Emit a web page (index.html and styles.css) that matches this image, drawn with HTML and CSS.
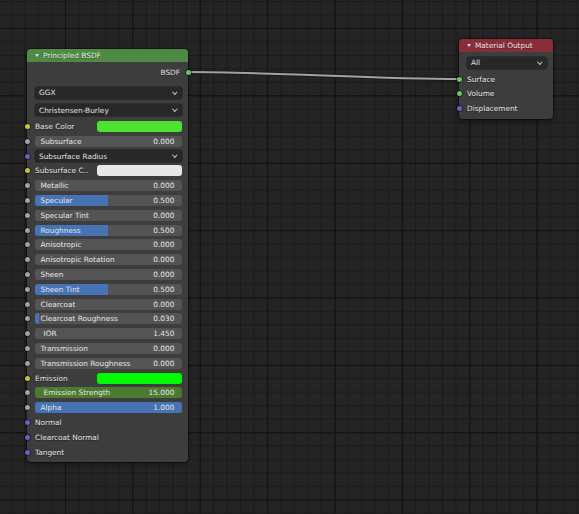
FILE: index.html
```html
<!DOCTYPE html>
<html>
<head>
<meta charset="utf-8">
<link rel="stylesheet" href="styles.css">
</head>
<body>
<div class="canvas">
  <svg class="links" width="579" height="514" viewBox="0 0 579 514">
    <path d="M188 72 C 270 72, 377 79, 459 79" class="link-back"/>
    <path d="M188 72 C 270 72, 377 79, 459 79" class="link-front"/>
  </svg>

  <div class="node bsdf">
    <div class="header green"><span class="tri"></span>Principled BSDF</div>
    <div class="body">
      <div class="row out"><span class="label">BSDF</span><span class="socket right shader"></span></div>
      <div class="row drop first"><div class="dropdown"><span>GGX</span><span class="chev"></span></div></div>
      <div class="row drop second"><div class="dropdown"><span>Christensen-Burley</span><span class="chev"></span></div></div>
      <div class="row in base"><span class="socket color"></span><span class="plabel">Base Color</span><span class="swatch" style="background:#4de22f"></span></div>
      <div class="row in"><span class="socket float"></span><div class="field"><span class="name">Subsurface</span><span class="val">0.000</span></div></div>
      <div class="row in"><span class="socket vector"></span><div class="dropdown"><span>Subsurface Radius</span><span class="chev"></span></div></div>
      <div class="row in"><span class="socket color"></span><span class="plabel">Subsurface C..</span><span class="swatch" style="background:#e8e8e8"></span></div>
      <div class="row in"><span class="socket float"></span><div class="field"><span class="name">Metallic</span><span class="val">0.000</span></div></div>
      <div class="row in"><span class="socket float"></span><div class="field"><span class="fill" style="width:50%"></span><span class="name">Specular</span><span class="val">0.500</span></div></div>
      <div class="row in"><span class="socket float"></span><div class="field"><span class="name">Specular Tint</span><span class="val">0.000</span></div></div>
      <div class="row in"><span class="socket float"></span><div class="field"><span class="fill" style="width:50%"></span><span class="name">Roughness</span><span class="val">0.500</span></div></div>
      <div class="row in"><span class="socket float"></span><div class="field"><span class="name">Anisotropic</span><span class="val">0.000</span></div></div>
      <div class="row in"><span class="socket float"></span><div class="field"><span class="name">Anisotropic Rotation</span><span class="val">0.000</span></div></div>
      <div class="row in"><span class="socket float"></span><div class="field"><span class="name">Sheen</span><span class="val">0.000</span></div></div>
      <div class="row in"><span class="socket float"></span><div class="field"><span class="fill" style="width:50%"></span><span class="name">Sheen Tint</span><span class="val">0.500</span></div></div>
      <div class="row in"><span class="socket float"></span><div class="field"><span class="name">Clearcoat</span><span class="val">0.000</span></div></div>
      <div class="row in"><span class="socket float"></span><div class="field"><span class="fill" style="width:3%"></span><span class="name">Clearcoat Roughness</span><span class="val">0.030</span></div></div>
      <div class="row in"><span class="socket float"></span><div class="field"><span class="name wide">IOR</span><span class="val">1.450</span></div></div>
      <div class="row in"><span class="socket float"></span><div class="field"><span class="name">Transmission</span><span class="val">0.000</span></div></div>
      <div class="row in"><span class="socket float"></span><div class="field"><span class="name">Transmission Roughness</span><span class="val">0.000</span></div></div>
      <div class="row in"><span class="socket color"></span><span class="plabel">Emission</span><span class="swatch" style="background:#00fa00"></span></div>
      <div class="row in"><span class="socket float"></span><div class="field anim"><span class="name wide">Emission Strength</span><span class="val">15.000</span></div></div>
      <div class="row in"><span class="socket float"></span><div class="field"><span class="fill" style="width:100%"></span><span class="name">Alpha</span><span class="val">1.000</span></div></div>
      <div class="row in"><span class="socket vector"></span><span class="plabel">Normal</span></div>
      <div class="row in"><span class="socket vector"></span><span class="plabel">Clearcoat Normal</span></div>
      <div class="row in"><span class="socket vector"></span><span class="plabel">Tangent</span></div>
    </div>
  </div>

  <div class="node output">
    <div class="header red"><span class="tri"></span>Material Output</div>
    <div class="body">
      <div class="row drop all"><div class="dropdown"><span>All</span><span class="chev"></span></div></div>
      <div class="row in first-in"><span class="socket shader"></span><span class="plabel">Surface</span></div>
      <div class="row in"><span class="socket shader"></span><span class="plabel">Volume</span></div>
      <div class="row in"><span class="socket vector"></span><span class="plabel">Displacement</span></div>
    </div>
  </div>
</div>
</body>
</html>
```

FILE: styles.css
```css
html, body {
  margin: 0;
  padding: 0;
  background: #242424;
}

.canvas {
  position: relative;
  width: 579px;
  height: 514px;
  overflow: hidden;
  background-color: #242424;
  background-image:
    linear-gradient(to right, #121212 1px, transparent 1px),
    linear-gradient(to bottom, #121212 1px, transparent 1px),
    linear-gradient(to right, #1b1b1b 1px, transparent 1px),
    linear-gradient(to bottom, #1b1b1b 1px, transparent 1px);
  background-size: 67.4px 67.4px, 67.4px 67.4px, 13.48px 13.48px, 13.48px 13.48px;
  background-position: 65px 0, 0 28px, 11px 0, 0 1px;
  font-family: "DejaVu Sans", "Liberation Sans", sans-serif;
  font-size: 7.35px;
  color: #e6e6e6;
}

.links {
  position: absolute;
  left: 0;
  top: 0;
}

.link-back {
  fill: none;
  stroke: #1a1a1a;
  stroke-width: 3.8;
}

.link-front {
  fill: none;
  stroke: #a2a2a2;
  stroke-width: 2;
}

.node {
  position: absolute;
  background: #3d3d3d;
  border-radius: 4px;
  box-shadow: 0 0 0 1px rgba(0, 0, 0, 0.35), 0 2px 5px rgba(0, 0, 0, 0.45);
}

.bsdf {
  left: 27px;
  top: 49px;
  width: 161px;
}

.output {
  left: 459px;
  top: 39px;
  width: 94px;
}

.header {
  height: 13px;
  display: flex;
  align-items: center;
  border-radius: 4px 4px 0 0;
  padding-left: 8px;
  color: #e8e8e8;
  text-shadow: 0 1px 1px rgba(0, 0, 0, 0.35);
}

.green { background: #4e8a44; }
.red { background: #882e38; }

.tri {
  width: 0;
  height: 0;
  border-left: 2.2px solid transparent;
  border-right: 2.2px solid transparent;
  border-top: 3.5px solid #dcdcdc;
  margin-right: 4px;
}

.bsdf .body {
  padding: 3px 0 2.4px 0;
}

.output .body {
  padding: 0 0 2.4px 0;
}

.row {
  position: relative;
  display: flex;
  align-items: center;
  box-sizing: border-box;
  padding: 0 6.3px 0 8px;
}

.row.out {
  height: 14px;
  justify-content: flex-end;
  padding-right: 8px;
}

.row.drop { height: 12px; }
.row.drop.first { margin-top: 7.5px; }
.row.drop.second { margin-top: 5.5px; }
.row.drop.all { margin-top: 5px; height: 11.5px; padding-right: 6px; }

.row.in { height: 14.8px; }
.row.base { margin-top: 3.2px; }
.row.first-in { margin-top: 3.3px; }

.label, .plabel {
  text-shadow: 0 1px 1px rgba(0, 0, 0, 0.45);
  white-space: nowrap;
}

.plabel {
  width: 62px;
  flex: none;
}

.output .plabel { width: auto; }

.socket {
  position: absolute;
  width: 5px;
  height: 5px;
  border-radius: 50%;
  top: 50%;
  left: -2.5px;
  margin-top: -2.5px;
  box-shadow: 0 0 0 0.8px rgba(0, 0, 0, 0.55);
}

.socket.right {
  left: auto;
  right: -2.5px;
}

.float { background: #a1a1a1; }
.color { background: #c7c729; }
.vector { background: #6363c7; }
.shader { background: #63c763; }

.dropdown {
  flex: 1;
  height: 100%;
  box-sizing: border-box;
  background: #282828;
  border-radius: 3px;
  display: flex;
  align-items: center;
  justify-content: space-between;
  padding: 0 4px 0 4px;
  color: #e2e2e2;
  box-shadow: 0 0 0 0.5px #1e1e1e;
}

.row.in .dropdown { height: 11.5px; }

.chev {
  width: 2.6px;
  height: 2.6px;
  border-right: 1px solid #c8c8c8;
  border-bottom: 1px solid #c8c8c8;
  transform: rotate(45deg);
  margin-top: -2px;
  margin-right: 1px;
}

.field {
  position: relative;
  flex: 1;
  height: 11px;
  background: #545454;
  border-radius: 3px;
  overflow: hidden;
  display: flex;
  align-items: center;
  justify-content: space-between;
  box-sizing: border-box;
  padding: 0 7.4px 0 5.5px;
  color: #e6e6e6;
}

.field.anim { background: #4c7a30; }

.fill {
  position: absolute;
  left: 0;
  top: 0;
  bottom: 0;
  background: #4772b3;
}

.name, .val {
  position: relative;
  white-space: nowrap;
}

.name.wide { padding-left: 3px; }

.swatch {
  flex: 1;
  height: 11px;
  border-radius: 3px;
}
```
